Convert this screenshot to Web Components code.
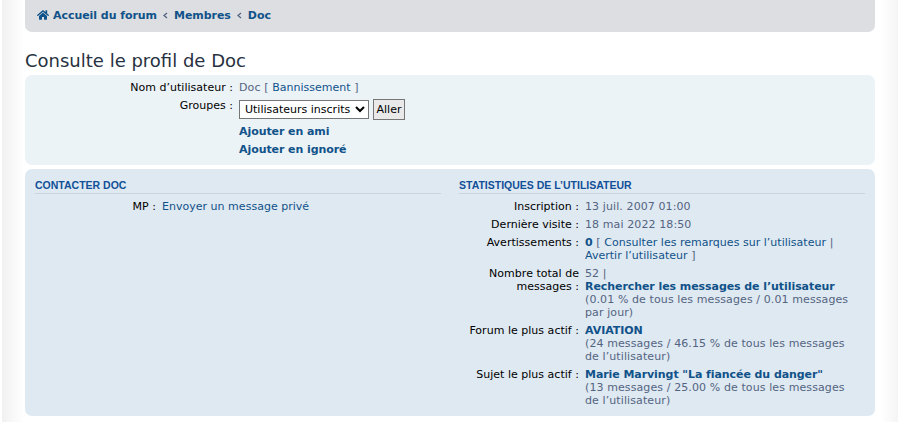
<!DOCTYPE html>
<html lang="fr">
<head>
<meta charset="utf-8">
<title>Consulte le profil de Doc</title>
<style>
  html, body { margin: 0; background: #fff; }
  body {
    height: 422px;
    overflow: hidden;
    font-family: "DejaVu Sans", Verdana, sans-serif;
    font-size: 11px;
    letter-spacing: .1px;
    color: #536482;
  }
  a.strong { font-weight: 700; letter-spacing: -.07px; }
</style>
</head>
<body>
<template id="page-tpl">
  <style>
    :host {
      display: block;
      height: 422px;
      box-sizing: border-box;
      padding: 0 23px 0 25px;
      background:
        linear-gradient(90deg, #fff 0, #fff 2px, #f1f1f1 2px, #fff 24px, #fff 880px, #f5f5f5 898px);
    }
    h2 {
      margin: 0;
      padding: 18px 0 4px;
      font: 400 18px/21px "DejaVu Sans", sans-serif;
      letter-spacing: 0;
      color: #28313f;
    }
  </style>
  <slot name="nav"></slot>
  <h2><slot name="title"></slot></h2>
  <slot></slot>
</template>

<template id="nav-tpl">
  <style>
    :host {
      display: flex;
      align-items: center;
      height: 32px;
      box-sizing: border-box;
      padding: 0 11px 2px 12px;
      background: #dcdee2;
      border-radius: 0 0 7px 7px;
      font-weight: 700;
      font-size: 11px;
      letter-spacing: -.05px;
      color: #105289;
    }
    svg { width: 12px; height: 12px; margin-right: 4px; fill: #105289; }
    .sep { width: 5px; margin: 0 6px 0 6px; fill: none; stroke: #536482; stroke-width: 1.3; height: 7px; }
  </style>
  <svg viewBox="0 0 576 512"><path d="M280 148 96 300v164c0 9 7 16 16 16l112-.3c9 0 16-7 16-16V368c0-9 7-16 16-16h64c9 0 16 7 16 16v96c0 9 7 16 16 16l112 .3c9 0 16-7 16-16V300L296 148c-4-4-12-4-16 0zm292 103-84-69V44c0-7-5-12-12-12h-56c-7 0-12 5-12 12v72l-90-74c-18-15-43-15-61 0L4 251c-5 4-6 12-2 17l26 31c4 5 12 6 17 2L280 107c4-4 12-4 16 0l235 194c5 4 13 3 17-2l26-31c4-5 3-13-2-17z"/></svg>
  <span>Accueil du forum</span>
  <svg class="sep" viewBox="0 0 5 7"><path d="M4 1 1 3.5 4 6"/></svg>
  <span>Membres</span>
  <svg class="sep" viewBox="0 0 5 7"><path d="M4 1 1 3.5 4 6"/></svg>
  <span>Doc</span>
</template>

<template id="panel-tpl">
  <style>
    :host {
      display: block;
      box-sizing: border-box;
      border-radius: 7px;
      background: var(--panel-bg, #ecf3f7);
    }
  </style>
  <slot></slot>
</template>

<template id="column-tpl">
  <style>
    :host { display: block; min-width: 0; }
    h3 {
      margin: 0 0 6px;
      height: 20px;
      box-sizing: border-box;
      padding-top: 4px;
      font: 700 10.5px/14px "Liberation Sans", Arial, sans-serif;
      letter-spacing: 0;
      color: #115098;
      text-transform: uppercase;
      border-bottom: 1px solid #ccd3da;
    }
  </style>
  <h3><slot name="head"></slot></h3>
  <slot></slot>
</template>

<template id="row-tpl">
  <style>
    :host {
      display: grid;
      grid-template-columns: var(--label-w, 121px) 1fr;
      column-gap: 6px;
      line-height: 13px;
      margin-bottom: var(--row-gap, 5px);
    }
    .label { text-align: right; color: #000; letter-spacing: .02px; }
    .value { color: #536482; min-width: 0; padding-right: 8px; }
    ::slotted(a) { color: #105289; text-decoration: none; letter-spacing: .02px; }
    ::slotted(b) { color: #105289; }
  </style>
  <div class="label"><slot name="label"></slot></div>
  <div class="value"><slot></slot></div>
</template>

<forum-page>
  <forum-nav slot="nav"></forum-nav>
  <span slot="title">Consulte le profil de Doc</span>

  <forum-panel style="height:90px;padding:6px 0 0;--label-w:208px;">
    <info-row style="--row-gap:5px"><span slot="label">Nom d’utilisateur :</span>Doc [ <a href="#">Bannissement</a> ]</info-row>
    <info-row style="--row-gap:5px">
      <span slot="label">Groupes :</span>
      <group-picker></group-picker>
    </info-row>
    <info-row style="--row-gap:5px"><a class="strong" href="#">Ajouter en ami</a></info-row>
    <info-row style="--row-gap:0"><a class="strong" href="#">Ajouter en ignoré</a></info-row>
  </forum-panel>

  <forum-panel style="display:grid;grid-template-columns:406px 406px;column-gap:18px;height:247px;margin-top:4px;padding:5px 10px;--panel-bg:#dfe9f1;">
    <info-column>
      <span slot="head">Contacter Doc</span>
      <info-row><span slot="label">MP :</span><a href="#">Envoyer un message privé</a></info-row>
    </info-column>
    <info-column style="--label-w:120px">
      <span slot="head">Statistiques de l’utilisateur</span>
      <info-row><span slot="label">Inscription :</span>13 juil. 2007 01:00</info-row>
      <info-row><span slot="label">Dernière visite :</span>18 mai 2022 18:50</info-row>
      <info-row><span slot="label">Avertissements :</span><b>0</b> [ <a href="#">Consulter les remarques sur l’utilisateur</a> | <a href="#">Avertir l’utilisateur</a> ]</info-row>
      <info-row><span slot="label">Nombre total de messages :</span>52 |<br><a class="strong" href="#">Rechercher les messages de l’utilisateur</a><br>(0.01 % de tous les messages / 0.01 messages par jour)</info-row>
      <info-row><span slot="label">Forum le plus actif :</span><a class="strong" href="#">AVIATION</a><br>(24 messages / 46.15 % de tous les messages de l’utilisateur)</info-row>
      <info-row><span slot="label">Sujet le plus actif :</span><a class="strong" href="#">Marie Marvingt "La fiancée du danger"</a><br>(13 messages / 25.00 % de tous les messages de l’utilisateur)</info-row>
    </info-column>
  </forum-panel>
</forum-page>

<script>
  // one small helper class: each element just clones its template
  function fromTemplate(id) {
    return class extends HTMLElement {
      constructor() {
        super();
        this.attachShadow({ mode: 'open' });
        this.shadowRoot.appendChild(document.getElementById(id).content.cloneNode(true));
      }
    };
  }
  customElements.define('forum-page', fromTemplate('page-tpl'));
  customElements.define('forum-nav', fromTemplate('nav-tpl'));
  customElements.define('forum-panel', fromTemplate('panel-tpl'));
  customElements.define('info-column', fromTemplate('column-tpl'));
  customElements.define('info-row', fromTemplate('row-tpl'));

  class GroupPicker extends HTMLElement {
    constructor() {
      super();
      this.attachShadow({ mode: 'open' });
      this.shadowRoot.innerHTML = `
        <style>
          :host { display: flex; align-items: center; gap: 4px; height: 21px; }
          select {
            width: 130px; height: 19px; padding: 0 0 0 1px;
            font: 11px "DejaVu Sans", sans-serif; color: #000;
            background: #fff; border: 1px solid #767676; border-radius: 0;
          }
          button {
            height: 21px; width: 32px; padding: 0;
            font: 11px "DejaVu Sans", sans-serif; color: #000;
            background: #e9e9e9; border: 1px solid #767676; border-radius: 0;
          }
        </style>
        <select><option>Utilisateurs inscrits</option></select>
        <button type="button">Aller</button>`;
    }
  }
  customElements.define('group-picker', GroupPicker);
</script>
</body>
</html>
